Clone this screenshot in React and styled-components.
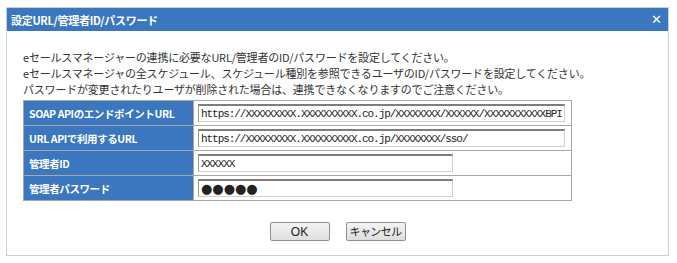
import React from "react";
import styled, { createGlobalStyle } from "styled-components";

const Global = createGlobalStyle`
  html, body { margin: 0; padding: 0; background: #fff; }
  body { font-family: "Noto Sans CJK JP", "Noto Sans", sans-serif; }
`;

const Page = styled.div`
  padding: 7px 8px 0 6px;
  width: 677px;
  box-sizing: border-box;
`;

const Dialog = styled.div`
  width: 663px;
  box-sizing: border-box;
  border: 1px solid #d2d2d2;
  background: #fff;
  display: flex;
  flex-direction: column;
`;

const Header = styled.div`
  height: 23px;
  background: #3a77bf;
  color: #fff;
  display: flex;
  align-items: center;
  justify-content: space-between;
  padding: 0 6px 0 4px;
`;

const Title = styled.div`
  font-size: 11px;
  font-weight: bold;
  letter-spacing: -0.3px;
`;

const Close = styled.span`
  font-size: 13px;
  line-height: 1;
  font-family: "DejaVu Sans", sans-serif;
`;

const Body = styled.div`
  padding: 18px 16px 14px 16px;
  display: flex;
  flex-direction: column;
`;

const Notes = styled.div`
  font-size: 11px;
  line-height: 16px;
  color: #333;
  letter-spacing: -0.2px;
  margin-bottom: 3px;
`;

const Table = styled.table`
  width: 549px;
  border-collapse: collapse;
  border: 1px solid #a8a8a8;
`;

const Label = styled.th`
  width: 164px;
  height: 24px;
  background: #3a77bf;
  color: #fff;
  font-size: 10.5px;
  font-weight: bold;
  text-align: left;
  padding: 0 0 0 5px;
  border: 1px solid #a8a8a8;
  letter-spacing: -0.4px;
  white-space: nowrap;
`;

const Cell = styled.td`
  padding: 0 0 0 4px;
  border: 1px solid #a8a8a8;
  height: 24px;
`;

const Field = styled.input`
  display: block;
  box-sizing: border-box;
  width: ${(p) => p.$w}px;
  height: 18px;
  border: 1px solid #cfcfcf;
  border-top: 2px solid #7d7d7d;
  border-left: 1px solid #9a9a9a;
  padding: 0 2px;
  font-family: ${(p) => (p.$dots ? '"DejaVu Sans", sans-serif' : '"Liberation Mono", monospace')};
  font-size: ${(p) => (p.$dots ? "13px" : "11px")};
  letter-spacing: ${(p) => (p.$dots ? "0" : "-1.05px")};
  color: #222;
  background: #fff;
  outline: none;
`;

const Buttons = styled.div`
  display: flex;
  justify-content: center;
  gap: 16px;
  margin-top: 21px;
`;

const Button = styled.button`
  width: 60px;
  height: 19px;
  box-sizing: border-box;
  border: 1px solid #8f8f8f;
  border-radius: 2px;
  background: linear-gradient(#f4f4f4, #dedede);
  font-family: ${(p) => (p.$jp ? '"Noto Sans CJK JP", sans-serif' : '"Liberation Sans", Arial, sans-serif')};
  font-size: ${(p) => (p.$jp ? "11px" : "12px")};
  color: #222;
  padding: 0;
  line-height: 1;
  white-space: nowrap;
  letter-spacing: ${(p) => (p.$jp ? "-0.6px" : "0")};
`;

const rows = [
  { label: "SOAP APIのエンドポイントURL", value: "https://XXXXXXXXX.XXXXXXXXXX.co.jp/XXXXXXXX/XXXXXX/XXXXXXXXXXXBPI", w: 367 },
  { label: "URL APIで利用するURL", value: "https://XXXXXXXXX.XXXXXXXXXX.co.jp/XXXXXXXX/sso/", w: 367 },
  { label: "管理者ID", value: "XXXXXX", w: 255 },
  { label: "管理者パスワード", value: "●●●●●", w: 255, dots: true },
];

export default function App() {
  return (
    <>
      <Global />
      <Page>
        <Dialog>
          <Header>
            <Title>設定URL/管理者ID/パスワード</Title>
            <Close>✕</Close>
          </Header>
          <Body>
            <Notes>
              eセールスマネージャーの連携に必要なURL/管理者のID/パスワードを設定してください。
              <br />
              eセールスマネージャの全スケジュール、スケジュール種別を参照できるユーザのID/パスワードを設定してください。
              <br />
              パスワードが変更されたりユーザが削除された場合は、連携できなくなりますのでご注意ください。
            </Notes>
            <Table>
              <tbody>
                {rows.map((r) => (
                  <tr key={r.label}>
                    <Label>{r.label}</Label>
                    <Cell>
                      <Field readOnly value={r.value} $w={r.w} $dots={r.dots} />
                    </Cell>
                  </tr>
                ))}
              </tbody>
            </Table>
            <Buttons>
              <Button>OK</Button>
              <Button $jp>キャンセル</Button>
            </Buttons>
          </Body>
        </Dialog>
      </Page>
    </>
  );
}
